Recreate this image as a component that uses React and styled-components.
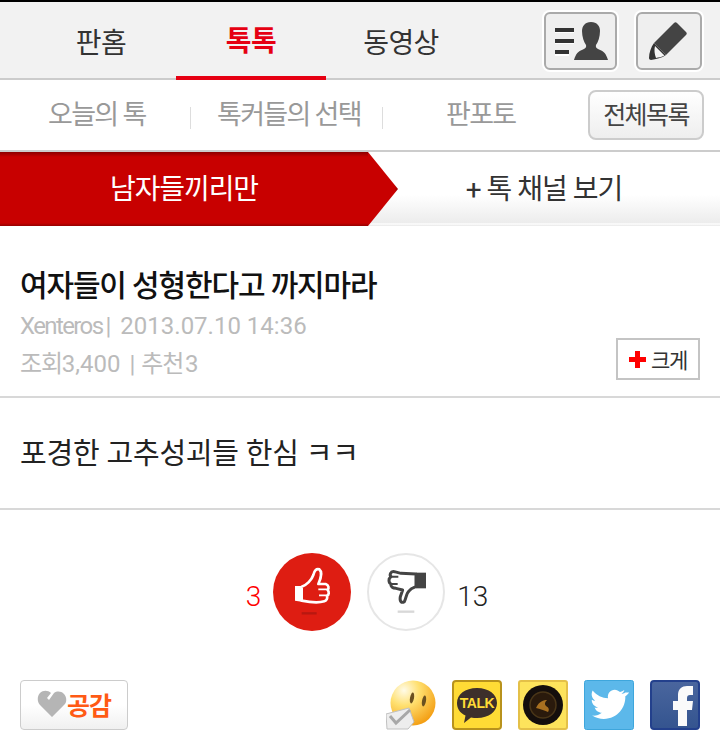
import React from "react";
import styled, { createGlobalStyle } from "styled-components";

const Global = createGlobalStyle`
  html, body { margin: 0; padding: 0; background: #fff; }
  body { font-family: Roboto, "Noto Sans CJK KR", sans-serif; }
  * { box-sizing: border-box; }
`;
const KR = `Roboto, "Noto Sans CJK KR", sans-serif`;

const Page = styled.div`width: 720px; height: 748px; overflow: hidden; background: #fff; font-family: ${KR};`;

const Header = styled.header`
  height: 80px; border-top: 2px solid #000; border-bottom: 2px solid #ccc; background: #f2f2f2;
  display: flex; align-items: stretch; padding-left: 26px;
`;
const MainTab = styled.div`
  width: 150px; height: 78px; display: flex; align-items: center; justify-content: center;
  font-size: 28px; letter-spacing: -0.6px; padding-bottom: ${p => (p.$active ? "0" : "1px")};
  color: ${p => (p.$active ? "#e60012" : "#333")};
  font-weight: ${p => (p.$active ? 700 : 400)};
  border-bottom: ${p => (p.$active ? "4px solid #e60012" : "none")};
  margin-bottom: -2px;
`;
const HeaderActions = styled.div`margin-left: auto; display: flex; gap: 19px; padding: 10px 18px 0 0;`;
const IconButton = styled.div`
  width: ${p => p.$w}px; height: 58px; border: 2px solid #aaa; border-radius: 6px; background: #efefef;
  box-shadow: 0 0 0 2px #fff; display: flex; align-items: center; justify-content: center;
`;

const SubNav = styled.nav`
  height: 72px; border-bottom: 2px solid #ccc; display: flex; align-items: center; position: relative; background: #fff;
`;
const SubItem = styled.div`
  width: ${p => p.$w}px; padding-left: ${p => p.$pl}px; font-size: 27px; letter-spacing: -1.7px; color: #999; white-space: nowrap; padding-bottom: 5px;
`;
const Divider = styled.span`width: 1px; height: 22px; background: #ddd; margin-top: 6px;`;
const ListButton = styled.div`
  margin-left: auto; margin-right: 16px; width: 116px; height: 50px; border: 2px solid #ccc; border-radius: 8px;
  background: linear-gradient(#fff, #eee); color: #444; font-size: 25px; letter-spacing: -1.6px;
  display: flex; align-items: center; justify-content: center; padding-bottom: 4px; white-space: nowrap;
`;

const ChannelBar = styled.div`
  height: 74px; display: flex; position: relative;
  background: linear-gradient(#fff 0, #fff 58%, #ececec 96%, #fff 97%, #e8e8e8 100%);
`;
const ChannelActive = styled.div`
  width: 368px; height: 74px; color: #fff; font-size: 28px; letter-spacing: -1.1px;
  background: linear-gradient(#8c0000 0, #c80000 5px, #c80000 71px, #960000 74px);
  display: flex; align-items: center; justify-content: center; padding-bottom: 5px; position: relative;
  &::after {
    content: ""; position: absolute; left: 100%; top: 0; width: 30px; height: 74px;
    background: linear-gradient(to left, #960000, #c80000 12%);
    clip-path: polygon(0 0, 100% 50%, 0 100%);
  }
`;
const ChannelLink = styled.div`
  flex: 1; display: flex; align-items: center; justify-content: center; font-size: 28px; letter-spacing: -1px; color: #333; padding-bottom: 5px;
`;

const PostHead = styled.section`
  height: 172px; border-bottom: 2px solid #d8d8d8; padding: 38px 20px 0; position: relative;
`;
const Title = styled.h1`
  margin: 0; font-size: 30px; line-height: 43px; font-weight: 500; letter-spacing: -1.15px; color: #111; white-space: nowrap;
`;
const Meta = styled.div`
  font-size: 24px; line-height: 38px; color: #bbb; white-space: nowrap;
`;
const MetaPart = styled.span`
  letter-spacing: ${p => p.$ls || 0}px; margin-right: ${p => p.$mr || 0}px;
`;
const ZoomButton = styled.div`
  position: absolute; right: 20px; top: 112px; width: 84px; height: 42px; border: 2px solid #c4c4c4; background: #fff;
  display: flex; align-items: center; justify-content: center; gap: 5px; font-size: 21px; letter-spacing: -1.4px; color: #333;
`;

const Body = styled.section`
  height: 112px; border-bottom: 2px solid #d8d8d8; padding: 34px 20px 0; font-size: 29px; line-height: 44px; color: #222; letter-spacing: -0.2px; white-space: nowrap;
`;

const Votes = styled.div`
  height: 171px; display: flex; align-items: flex-start; justify-content: center; padding-top: 43px; padding-left: 14px;
`;
const Count = styled.span`
  font-size: 28px; line-height: 78px; font-weight: 300; color: ${p => p.$c}; margin: ${p => p.$m}; padding-top: 5px;
`;
const VoteCircle = styled.div`
  width: 78px; height: 78px; border-radius: 50%; display: flex; align-items: center; justify-content: center;
  background: ${p => (p.$on ? "#de1d12" : "#fff")}; border: ${p => (p.$on ? "none" : "2px solid #e6e6e6")};
  margin-right: ${p => p.$mr || 0}px;
`;

const Footer = styled.footer`
  display: flex; align-items: flex-start; padding: 0 20px; margin-top: -1px;
`;
const LikeButton = styled.div`
  width: 108px; height: 50px; border: 1px solid #ccc; border-radius: 4px; background: linear-gradient(#fff 50%, #f0f0f0);
  display: flex; align-items: center; justify-content: center; gap: 0; color: #ff5a14; font-size: 25px; font-weight: 700; letter-spacing: -1px; padding-bottom: 2px;
`;
const Shares = styled.div`margin-left: auto; display: flex; gap: 16px;`;
const Share = styled.div`width: 50px; height: 50px;`;

const ListUserIcon = () => (
  <svg width="56" height="38" viewBox="0 0 56 38">
    <path d="M2 9h19v2H2zM2 20h19v2H2zM2 32h14v2H2z" fill="#fff" />
    <path d="M2 6h19v4H2zM2 17h19v4H2zM2 28h14v4H2z" fill="#333" />
    <path d="M38 0c6 0 9 4 9 9 0 6-2 11-4 14-.5 2 0 3 3 4.500 5 2 7 4 9 10.500H21c2-6.500 4-8.500 9-10.500 3-1.500 3.500-2.500 3-4.500-2-3-4-8-4-14 0-5 3-9 9-9z" fill="#444" />
  </svg>
);
const PencilIcon = () => (
  <svg width="40" height="40" viewBox="0 0 40 40">
    <path d="M25 2c1-1 2-1 3 0l9 9c1 1 1 2 0 3L17 34 5 22z" fill="#444" />
    <path d="M5 22l12 12c-4 3-10 4-15 5-1 0-2-1-2-2 0-5 2-11 5-15z" fill="#333" />
    <path d="M6 25l9.500 9.500c-3 1.500-6 2-8.500 2.500-1.500-4-2-8-1-12z" fill="#f4f4f4" />
  </svg>
);
const ThumbUp = () => (
  <svg width="78" height="78" viewBox="0 0 78 78">
    <g transform="translate(12 7) scale(.3333)">
      <path d="M30 78L50 78 50 125 30 122z" fill="#fff" />
      <path d="M50 80C65 75 80 60 85 45 88 30 95 25 103 28 112 35 108 55 100 72L122 72C132 75 132 85 128 90 133 95 132 105 126 108 128 115 125 122 118 124 105 128 80 128 50 122z" fill="none" stroke="#fff" strokeWidth="8" strokeLinejoin="round" />
      <path d="M100 88H128M102 106H126" stroke="#fff" strokeWidth="5" />
      <path d="M50 160H95" stroke="#b81810" strokeWidth="7" />
    </g>
  </svg>
);
const ThumbDown = () => (
  <svg width="74" height="74" viewBox="0 0 74 74">
    <g transform="translate(12 5) scale(.3333)">
      <path d="M105 38H135V85H105z" fill="#444" />
      <path d="M105 42L60 40 40 35C28 33 25 45 30 50 22 55 22 68 30 72 28 80 35 85 45 85L65 90 58 110C55 125 62 130 70 125 76 115 75 100 85 92 90 85 100 82 105 80z" fill="none" stroke="#444" strokeWidth="9" strokeLinejoin="round" />
      <path d="M30 50H52M30 72H50" stroke="#444" strokeWidth="6" />
      <path d="M50 155H100" stroke="#d8d8d8" strokeWidth="7" />
    </g>
  </svg>
);
const HeartIcon = () => (
  <svg width="30" height="28" viewBox="0 0 30 28">
    <path d="M15 27L3 15C0 12 0 6 3 3c3-3 8-3 11 0l-4 5 2 2 5-7c3-2 7-2 10 1 3 3 3 9 0 11z" fill="#b5b5b5" />
  </svg>
);
const Plus = () => (
  <svg width="17" height="17" viewBox="0 0 17 17"><path d="M6 0h5v6h6v5h-6v6H6v-6H0V6h6z" fill="#f00" /></svg>
);
const Smiley = () => (
  <svg width="50" height="50" viewBox="0 0 50 50">
    <defs>
      <radialGradient id="sm" cx="30%" cy="22%" r="85%">
        <stop offset="0" stopColor="#fffbe8" /><stop offset=".4" stopColor="#ffe070" /><stop offset="1" stopColor="#f39c10" />
      </radialGradient>
    </defs>
    <circle cx="27" cy="23" r="22.500" fill="url(#sm)" />
    <ellipse cx="26" cy="18" rx="2" ry="5.500" fill="#6a5020" transform="rotate(10 26 18)" />
    <ellipse cx="38" cy="21" rx="2" ry="5.500" fill="#6a5020" transform="rotate(10 38 21)" />
    <path d="M0 34l23-6 5 14-6 7H1z" fill="#ededed" stroke="#c0c0c0" />
    <path d="M4 36l6 7 14-13" fill="none" stroke="#a8a8a8" strokeWidth="3" />
  </svg>
);
const KakaoIcon = () => (
  <svg width="50" height="50" viewBox="0 0 50 50">
    <rect x="1" y="1" width="48" height="48" rx="3" fill="#ffdb35" stroke="#b8921c" strokeWidth="2" />
    <path d="M25 8c12 0 20 6.500 20 15s-8 15-20 15c-2 0-4 0-6-.5L12 43l1.500-7.500C8 33 5 28.500 5 23 5 14.500 13 8 25 8z" fill="#3d2f2b" />
    <text x="25" y="28" textAnchor="middle" fontFamily="Liberation Sans, sans-serif" fontWeight="700" fontSize="14" letterSpacing="-.5" fill="#ffdb35">TALK</text>
  </svg>
);
const CameraIcon = () => (
  <svg width="50" height="50" viewBox="0 0 50 50">
    <rect x="1" y="1" width="48" height="48" rx="2" fill="#fde35c" stroke="#e4c048" strokeWidth="2" />
    <circle cx="25" cy="25" r="20" fill="#140e0c" />
    <circle cx="25" cy="25" r="13" fill="#2a1a0c" stroke="#4a3618" strokeWidth="1.500" />
    <path d="M18 28c3-7 8-8 11-8-2 2-3 4-1 6 2 1 4 3 2 6-4-2-8-3-12-4z" fill="#a87020" />
  </svg>
);
const TwitterIcon = () => (
  <svg width="50" height="50" viewBox="0 0 50 50">
    <rect x=".5" y=".5" width="49" height="49" rx="2" fill="#5cb8ea" stroke="#3ea6dc" />
    <path d="M42 12c-1.500 1-3 1.500-4 1.500 1.500-1 2.500-2 3-4-1.500 1-3 1.500-4.500 2-1.500-1.500-3.500-2.500-5.500-2.500-4.500 0-8 4-7 9-6 0-12-3-16-8-2 3.500-1 8 2.500 10.500-1.500 0-2.500-.5-3.500-1 0 4 2.500 7 6.500 8-1 .5-2.500.5-3.500 0 1 3 4 5.500 7.500 5.500-3 2.500-6.500 3.500-10 3 3.500 2.500 8 3.500 12 3.500 15 0 23-12.500 22.500-23.500 1.500-1 3-2.500 4-4z" fill="#fff" transform="translate(1 1) scale(.96)" />
  </svg>
);
const FacebookIcon = () => (
  <svg width="50" height="50" viewBox="0 0 50 50">
    <defs>
      <linearGradient id="fb" x1="0" y1="0" x2="0" y2="1">
        <stop offset="0" stopColor="#4a669e" /><stop offset="1" stopColor="#34548f" />
      </linearGradient>
    </defs>
    <rect x="1" y="1" width="48" height="48" rx="3" fill="url(#fb)" stroke="#23408c" strokeWidth="2" />
    <path d="M28 46V30h-5v-9h5v-6c0-6 4-9 9-9h6v9h-3c-2 0-3 1-3 3v3h6l-1 9h-5v16z" fill="#fafafa" />
  </svg>
);

export default function App() {
  return (
    <Page>
      <Global />
      <Header>
        <MainTab>판홈</MainTab>
        <MainTab $active>톡톡</MainTab>
        <MainTab>동영상</MainTab>
        <HeaderActions>
          <IconButton $w={73}><ListUserIcon /></IconButton>
          <IconButton $w={66}><PencilIcon /></IconButton>
        </HeaderActions>
      </Header>
      <SubNav>
        <SubItem $w={190} $pl={48}>오늘의 톡</SubItem>
        <Divider />
        <SubItem $w={191} $pl={26}>톡커들의 선택</SubItem>
        <Divider />
        <SubItem $w={150} $pl={63}>판포토</SubItem>
        <ListButton>전체목록</ListButton>
      </SubNav>
      <ChannelBar>
        <ChannelActive>남자들끼리만</ChannelActive>
        <ChannelLink>+ 톡 채널 보기</ChannelLink>
      </ChannelBar>
      <PostHead>
        <Title>여자들이 성형한다고 까지마라</Title>
        <Meta>
          <MetaPart $ls={-1.6} $mr={3}>Xenteros</MetaPart>
          <MetaPart $mr={9}>|</MetaPart>
          <MetaPart>2013.07.10 14:36</MetaPart>
        </Meta>
        <Meta>
          <MetaPart $ls={-1.2}>조회</MetaPart>
          <MetaPart $mr={9}>3,400</MetaPart>
          <MetaPart $mr={6}>|</MetaPart>
          <MetaPart $ls={-1.2} $mr={2}>추천</MetaPart>
          <MetaPart>3</MetaPart>
        </Meta>
        <ZoomButton><Plus />크게</ZoomButton>
      </PostHead>
      <Body>포경한 고추성괴들 한심 ㅋㅋ</Body>
      <Votes>
        <Count $c="#f00" $m="0 12px 0 0">3</Count>
        <VoteCircle $on $mr={16}><ThumbUp /></VoteCircle>
        <VoteCircle><ThumbDown /></VoteCircle>
        <Count $c="#222" $m="0 0 0 12px">13</Count>
      </Votes>
      <Footer>
        <LikeButton><HeartIcon />공감</LikeButton>
        <Shares>
          <Share><Smiley /></Share>
          <Share><KakaoIcon /></Share>
          <Share><CameraIcon /></Share>
          <Share><TwitterIcon /></Share>
          <Share><FacebookIcon /></Share>
        </Shares>
      </Footer>
    </Page>
  );
}
